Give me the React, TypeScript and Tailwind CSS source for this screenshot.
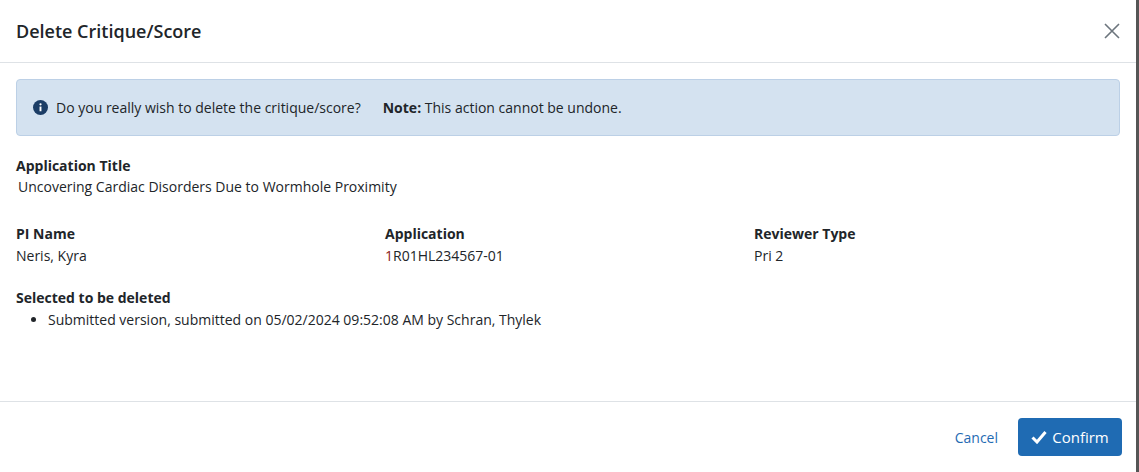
import React from "react";

export default function App() {
  return (
    <div className="w-[1139px] h-[472px] bg-white flex flex-col border-r-[3px] border-[#555] text-[#212529]" style={{ fontFamily: '"Open Sans", sans-serif' }}>
      <div className="h-[63px] flex items-center justify-between pl-4 pr-4 border-b border-[#dee2e6]">
        <h1 className="text-[18px] font-semibold text-[#212529]">Delete Critique/Score</h1>
        <svg width="16" height="16" viewBox="0 0 16 16" className="mr-0"><path d="M1 1L15 15M15 1L1 15" stroke="#6c757d" strokeWidth="1.6" /></svg>
      </div>
      <div className="flex-1 px-4 pt-4 text-[14px]">
        <div className="h-[57px] bg-[#d4e2f0] border border-[#bcd0e6] rounded flex items-center px-4 text-[#212529]">
          <svg width="15" height="15" viewBox="0 0 16 16" className="mr-2"><circle cx="8" cy="8" r="8" fill="#1b3d66" /><rect x="7" y="7" width="2" height="5" fill="white" /><circle cx="8" cy="4.6" r="1.2" fill="white" /></svg>
          <span>Do you really wish to delete the critique/score?</span>
          <span className="ml-[22px]"><b className="font-bold">Note:</b> This action cannot be undone.</span>
        </div>
        <div className="mt-[20px]">
          <div className="font-bold leading-[20px]">Application Title</div>
          <div className="leading-[22px] pl-[2px]">Uncovering Cardiac Disorders Due to Wormhole Proximity</div>
        </div>
        <div className="grid grid-cols-3 mt-[26px]">
          <div><div className="font-bold leading-[20px]">PI Name</div><div className="leading-[24px]">Neris, Kyra</div></div>
          <div className="pl-[1px]"><div className="font-bold leading-[20px]">Application</div><div className="leading-[24px]"><span className="text-[#8b1a1a]">1</span>R01HL234567-01</div></div>
          <div className="pl-[2px]"><div className="font-bold leading-[20px]">Reviewer Type</div><div className="leading-[24px]">Pri 2</div></div>
        </div>
        <div className="mt-[20px]">
          <div className="font-bold leading-[20px]">Selected to be deleted</div>
          <ul className="list-disc pl-[32px] leading-[24px]"><li>Submitted version, submitted on 05/02/2024 09:52:08 AM by Schran, Thylek</li></ul>
        </div>
      </div>
      <div className="h-[71px] border-t border-[#dee2e6] flex items-center justify-end pr-[14px] gap-[20px] text-[14px]">
        <span className="text-[#1f6bb3]">Cancel</span>
        <button className="h-[38px] w-[104px] rounded bg-[#1f6bb3] text-white flex items-center justify-center gap-[5px] text-[15px]">
          <svg width="16" height="14" viewBox="0 0 16 14"><path d="M1.5 7.5L6 12L14.5 2" stroke="white" strokeWidth="3" fill="none" /></svg>
          Confirm
        </button>
      </div>
    </div>
  );
}
